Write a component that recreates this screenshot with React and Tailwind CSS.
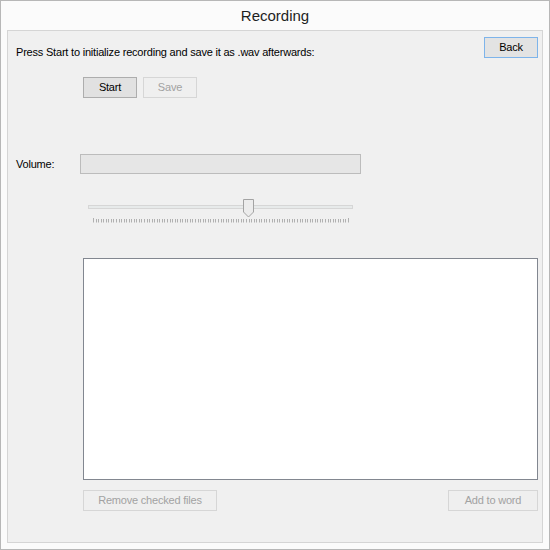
import React from "react";

const ticks = Array.from({ length: 101 }, (_, i) => Math.round(8 + i * 2.55) + 0.5);

function WinButton({ children, disabled, isDefault, className = "" }) {
  const look = disabled
    ? "border-[#d6d6d6] bg-[#efefef] text-[#a2a2a2]"
    : isDefault
    ? "border-[#7eb4ea] bg-[#e3e3e3] text-black"
    : "border-[#adadad] bg-[#e1e1e1] text-black";
  return (
    <button
      disabled={disabled}
      className={`h-[21px] border flex items-center justify-center text-[11px] tracking-[-0.2px] leading-none ${look} ${className}`}
    >
      {children}
    </button>
  );
}

function VolumeSlider() {
  return (
    <svg width="270" height="26" className="block ml-[77px] mt-[24px]">
      <rect x="3.5" y="7.5" width="264" height="3" fill="#e7eaea" stroke="#d6d6d6" />
      <path d="M158.5 1.5 H168.5 V14 L163.5 19 L158.5 14 Z" fill="#ececec" stroke="#a3a3a3" />
      {ticks.map((x, i) => (
        <line
          key={i}
          x1={x}
          x2={x}
          y1={i === 0 || i === ticks.length - 1 ? 20 : 21}
          y2="24.5"
          stroke="#b0b0b0"
          strokeWidth="1"
        />
      ))}
    </svg>
  );
}

export default function App() {
  return (
    <div
      className="w-[550px] h-[550px] border border-[#b7b7b7] bg-[#fbfbfb] flex flex-col text-black"
      style={{ fontFamily: '"Segoe UI", "Liberation Sans", Arial, sans-serif' }}
    >
      <div className="h-[29px] flex items-center justify-center text-[15px] text-[#1e1e1e] pt-[1px]">
        Recording
      </div>

      <div className="mx-[6px] mb-[6px] flex-1 border border-[#d5d5d5] bg-[#f0f0f0] flex flex-col">
        {/* header */}
        <div className="flex justify-between items-start h-[21px] mt-[6px]">
          <p className="ml-[8px] mt-[9px] text-[11px] leading-[12px] tracking-[-0.2px]">
            Press Start to initialize recording and save it as .wav afterwards:
          </p>
          <WinButton isDefault className="w-[54px] mr-[4px]">
            Back
          </WinButton>
        </div>

        {/* start / save */}
        <div className="flex gap-[6px] ml-[75px] mt-[19px]">
          <WinButton className="w-[54px]">Start</WinButton>
          <WinButton disabled className="w-[54px]">
            Save
          </WinButton>
        </div>

        {/* volume */}
        <div className="flex items-center mt-[56px]">
          <span className="ml-[8px] w-[64px] text-[11px] tracking-[-0.2px]">Volume:</span>
          <div className="w-[281px] h-[20px] border border-[#bcbcbc] bg-[#e6e6e6]" />
        </div>

        <VolumeSlider />

        {/* file list */}
        <div className="ml-[75px] mt-[34px] w-[455px] h-[222px] border border-[#828790] bg-white" />

        {/* bottom buttons */}
        <div className="flex justify-between ml-[75px] mr-[4px] mt-[10px]">
          <WinButton disabled className="w-[134px]">
            Remove checked files
          </WinButton>
          <WinButton disabled className="w-[90px]">
            Add to word
          </WinButton>
        </div>
      </div>
    </div>
  );
}
